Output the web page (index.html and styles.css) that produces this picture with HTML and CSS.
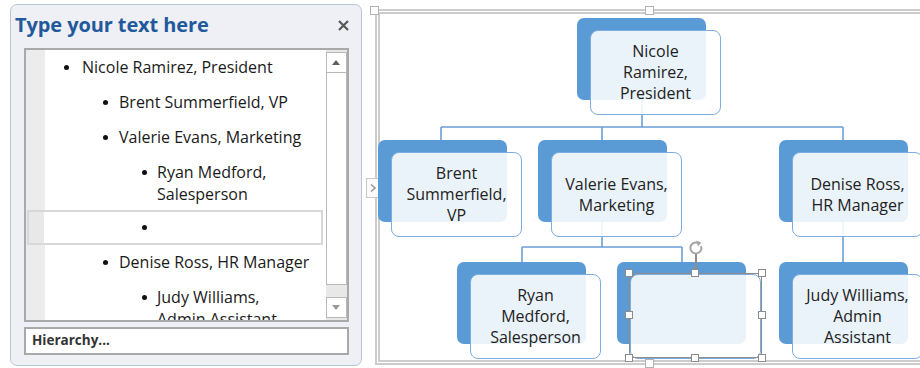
FILE: index.html
```html
<!DOCTYPE html>
<html lang="en">
<head>
    <meta charset="UTF-8">
    <title>Org chart - text pane</title>
    <link rel="stylesheet" href="styles.css">
</head>
<body>
    <div class="text-pane">
        <div class="pane-head">
            <span class="pane-title">Type your text here</span>
            <svg class="pane-close" width="11" height="11" viewBox="0 0 11 11"><path d="M1 1 L10 10 M10 1 L1 10" stroke="#585858" stroke-width="2.2"/></svg>
        </div>
        <div class="list-box">
            <ul class="outline">
                <li class="lvl-1">Nicole Ramirez, President</li>
                <li class="lvl-2">Brent Summerfield, VP</li>
                <li class="lvl-2">Valerie Evans, Marketing</li>
                <li class="lvl-3">Ryan Medford,<br>Salesperson</li>
                <li class="lvl-3 current"></li>
                <li class="lvl-2">Denise Ross, HR Manager</li>
                <li class="lvl-3">Judy Williams,<br>Admin Assistant</li>
            </ul>
            <div class="scrollbar">
                <div class="sb-btn sb-up"></div>
                <div class="sb-thumb"></div>
                <div class="sb-btn sb-down"></div>
            </div>
        </div>
        <div class="layout-name">Hierarchy...</div>
    </div>

    <div class="canvas">
        <div class="frame"></div>
        <div class="handle" style="left: 0px; top: 6px;"></div>
        <div class="handle" style="left: 275px; top: 6px;"></div>
        <div class="handle" style="left: 275px; top: 359px;"></div>
        <div class="pane-toggle">
            <svg width="8" height="10" viewBox="0 0 8 10"><path d="M2 1.5 L6 5 L2 8.5" fill="none" stroke="#9a9a9a" stroke-width="1.6"/></svg>
        </div>

        <!-- connectors, in canvas coordinates -->
        <svg class="lines" width="550" height="368">
            <path d="M272 100 V127 M71 127 H473 M71 127 V140 M232 127 V140 M473 127 V140
                     M232 222 V247 M152 247 H312 M152 247 V262 M312 247 V262 M473 222 V262"
                  fill="none" stroke="#6b9fd6" stroke-width="1.6"/>
        </svg>

        <div class="node" style="left: 207px; top: 18px;"><div class="node-box">Nicole<br>Ramirez,<br>President</div></div>
        <div class="node" style="left: 8px; top: 140px;"><div class="node-box">Brent<br>Summerfield,<br>VP</div></div>
        <div class="node" style="left: 168px; top: 140px;"><div class="node-box">Valerie Evans,<br>Marketing</div></div>
        <div class="node" style="left: 409px; top: 140px;"><div class="node-box">Denise Ross,<br>HR Manager</div></div>
        <div class="node" style="left: 87px; top: 262px;"><div class="node-box">Ryan<br>Medford,<br>Salesperson</div></div>
        <div class="node" style="left: 247px; top: 262px;"><div class="node-box"></div></div>
        <div class="node" style="left: 409px; top: 262px;"><div class="node-box">Judy Williams,<br>Admin<br>Assistant</div></div>

        <div class="selection">
            <div class="rotate-line"></div>
            <svg class="rotate" width="16" height="16" viewBox="0 0 16 16">
                <path d="M13 6 A5.5 5.5 0 1 1 9.6 2.8" fill="none" stroke="#a6a6a6" stroke-width="2"/>
                <path d="M8.2 0.4 L13.4 2.4 L10 6.4 Z" fill="#a6a6a6"/>
            </svg>
            <span class="sel-h tl"></span><span class="sel-h tm"></span><span class="sel-h tr"></span>
            <span class="sel-h ml"></span><span class="sel-h mr"></span>
            <span class="sel-h bl"></span><span class="sel-h bm"></span><span class="sel-h br"></span>
        </div>
    </div>
</body>
</html>
```

FILE: styles.css
```css
body {
    margin: 0;
    width: 920px;
    height: 368px;
    overflow: hidden;
    background: #fff;
    display: flex;
    align-items: flex-start;
    font-family: "Open Sans", "Liberation Sans", sans-serif;
}

/* text pane */
.text-pane {
    margin: 4px 0 0 10px;
    width: 352px;
    height: 362px;
    box-sizing: border-box;
    flex: none;
    border: 1px solid #b7c6d0;
    border-radius: 7px;
    background: #eff0f6;
    padding: 0 12px 10px 13px;
    display: flex;
    flex-direction: column;
}
.pane-head {
    height: 43px;
    margin: 0 -4px 0 -9px;
    display: flex;
    justify-content: space-between;
    align-items: flex-start;
    padding-top: 6px;
    box-sizing: border-box;
}
.pane-title {
    font-size: 20px;
    font-weight: bold;
    line-height: 28px;
    color: #22599a;
    letter-spacing: -0.1px;
}
.pane-close {
    margin: 9px 4px 0 0;
}
.list-box {
    height: 274px;
    box-sizing: border-box;
    border: 2px solid #a9a9a9;
    background: #fff;
    display: flex;
}
.outline {
    flex: 1;
    margin: 0;
    padding: 0;
    list-style: none;
    overflow: hidden;
    background: linear-gradient(to right, #ececec 19px, #fff 19px);
}
.outline li {
    position: relative;
    padding: 6px 0 7px;
    font-size: 16px;
    line-height: 22px;
    color: #1a1a1a;
}
.outline li::before {
    content: "";
    position: absolute;
    top: 15px;
    width: 5px;
    height: 5px;
    border-radius: 50%;
    background: #111;
}
.lvl-1 { padding-left: 56px !important; }
.lvl-1::before { left: 38px; }
.lvl-2 { padding-left: 93px !important; }
.lvl-2::before { left: 77px; }
.lvl-3 { padding-left: 131px !important; }
.lvl-3::before { left: 116px; }
.outline li.current {
    height: 22px;
    margin: -2px 3px 0 1px;
    padding: 4px 0 5px;
    border: 2px solid #d7d7d7;
    background: linear-gradient(to right, #e8e8e8 15px, #fff 15px);
}
.outline li.current::before {
    left: 113px;
    top: 13px;
}
.scrollbar {
    width: 21px;
    box-sizing: border-box;
    padding: 2px 0;
    background: #e8e8e8;
    display: flex;
    flex-direction: column;
}
.sb-btn {
    height: 21px;
    box-sizing: border-box;
    border: 1px solid #b9b9b9;
    background: #fff;
    position: relative;
}
.sb-up::after,
.sb-down::after {
    content: "";
    position: absolute;
    left: 5px;
    top: 7px;
    border-left: 4px solid transparent;
    border-right: 4px solid transparent;
}
.sb-up::after { border-bottom: 5px solid #606060; }
.sb-down::after { border-top: 5px solid #9a9a9a; }
.sb-thumb {
    height: 212px;
    box-sizing: border-box;
    border: 1px solid #b9b9b9;
    border-top: none;
    background: #fff;
    margin-bottom: 12px;
}
.layout-name {
    margin-top: 5px;
    height: 28px;
    box-sizing: border-box;
    border: 2px solid #a9a9a9;
    background: #fff;
    padding-left: 6px;
    font-size: 13.5px;
    font-weight: bold;
    line-height: 23px;
    color: #333;
}

/* diagram canvas */
.canvas {
    position: relative;
    flex: none;
    width: 550px;
    height: 368px;
    margin-left: 8px;
}
.frame {
    position: absolute;
    left: 5px;
    top: 9px;
    width: 570px;
    height: 356px;
    box-sizing: border-box;
    border: 5px double #cccccc;
}
.handle {
    position: absolute;
    width: 9px;
    height: 9px;
    box-sizing: border-box;
    border: 1px solid #b3b3b3;
    background: #fff;
}
.pane-toggle {
    position: absolute;
    left: -4px;
    top: 178px;
    width: 14px;
    height: 20px;
    box-sizing: border-box;
    border: 1px solid #c9c9c9;
    background: #fafafa;
    display: flex;
    align-items: center;
    justify-content: center;
}
.lines {
    position: absolute;
    left: 0;
    top: 0;
}
.node {
    position: absolute;
    width: 129px;
    height: 82px;
    border-radius: 7px;
    background: #5b9bd5;
}
.node-box {
    position: absolute;
    left: 13px;
    top: 12px;
    width: 131px;
    height: 85px;
    box-sizing: border-box;
    border: 1.5px solid #7badde;
    border-radius: 8px;
    background: rgba(255, 255, 255, 0.88);
    display: flex;
    align-items: center;
    justify-content: center;
    text-align: center;
    font-size: 16px;
    line-height: 21px;
    color: #222;
}
.selection {
    position: absolute;
    left: 259px;
    top: 273px;
    width: 133px;
    height: 85px;
    box-sizing: border-box;
    border: 1.5px solid #8c8c8c;
}
.sel-h {
    position: absolute;
    width: 8px;
    height: 8px;
    box-sizing: border-box;
    border: 1px solid #8c8c8c;
    background: #fff;
}
.tl { left: -5px; top: -5px; }
.tm { left: 61px; top: -5px; }
.tr { right: -5px; top: -5px; }
.ml { left: -5px; top: 37px; }
.mr { right: -5px; top: 37px; }
.bl { left: -5px; bottom: -5px; }
.bm { left: 61px; bottom: -5px; }
.br { right: -5px; bottom: -5px; }
.rotate-line {
    position: absolute;
    left: 65px;
    top: -20px;
    width: 1.5px;
    height: 19px;
    background: #8c8c8c;
}
.rotate {
    position: absolute;
    left: 58px;
    top: -34px;
}
```
